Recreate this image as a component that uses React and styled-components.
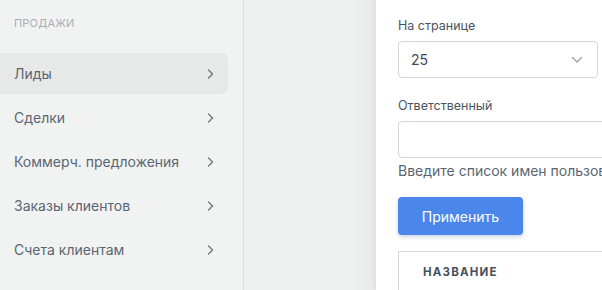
import React from "react";
import styled, { createGlobalStyle } from "styled-components";

const Global = createGlobalStyle`
  html, body { margin: 0; padding: 0; }
  body { font-family: "Inter", "Noto Sans", sans-serif; overflow: hidden; }
`;

const Page = styled.div`
  display: flex;
  width: 602px;
  height: 290px;
  overflow: hidden;
  background: #eff1f1;
`;

const Sidebar = styled.nav`
  flex: 0 0 244px;
  background: #f1f3f3;
  border-right: 1px solid #d9dde1;
  padding-top: 16px;
  box-sizing: border-box;
`;

const SectionTitle = styled.div`
  font-size: 11px;
  color: #a9aeb5;
  letter-spacing: 0.2px;
  padding-left: 14px;
  height: 14px;
  line-height: 14px;
  margin-bottom: 23px;
`;

const Item = styled.div`
  display: flex;
  align-items: center;
  justify-content: space-between;
  width: 228px;
  height: 41px;
  margin-bottom: 3px;
  padding: 0 14px 0 14px;
  box-sizing: border-box;
  border-radius: 0 6px 6px 0;
  font-size: 14px;
  color: #5b6572;
  background: ${(p) => (p.$active ? "#e7e9e9" : "transparent")};
`;

const Chevron = () => (
  <svg width="8" height="12" viewBox="0 0 8 12" fill="none">
    <path d="M2.5 2l4 4-4 4" stroke="#6b7480" strokeWidth="1.3" strokeLinecap="round" strokeLinejoin="round" />
  </svg>
);

const Backdrop = styled.div`
  flex: 0 0 132px;
  background: linear-gradient(to right, #eff1f1 0%, #eff1f1 80%, #e7e9ea 100%);
`;

const Drawer = styled.section`
  flex: 0 0 420px;
  background: #ffffff;
  padding: 17px 22px 0;
  box-sizing: border-box;
  box-shadow: -2px 0 6px rgba(0, 0, 0, 0.05);
`;

const Label = styled.div`
  font-size: 12.5px;
  color: #4a5360;
  height: 18px;
  line-height: 18px;
  margin-bottom: 6px;
`;

const Select = styled.div`
  display: flex;
  align-items: center;
  justify-content: space-between;
  width: 200px;
  height: 37px;
  border: 1px solid #d3d7db;
  border-radius: 4px;
  padding: 0 14px 0 12px;
  box-sizing: border-box;
  font-size: 14px;
  color: #3f4854;
  margin-bottom: 19px;
`;

const Input = styled.div`
  width: 380px;
  height: 37px;
  border: 1px solid #d3d7db;
  border-radius: 4px;
  box-sizing: border-box;
`;

const Help = styled.div`
  font-size: 14px;
  color: #5b6572;
  white-space: nowrap;
  margin-top: 3px;
  height: 20px;
  line-height: 20px;
  margin-bottom: 16px;
`;

const Button = styled.button`
  width: 125px;
  height: 38px;
  border: none;
  border-radius: 4px;
  background: #4b86ea;
  color: #ffffff;
  font-family: inherit;
  font-size: 14px;
  box-shadow: 0 2px 4px rgba(40, 80, 160, 0.25);
  margin-bottom: 16px;
  display: block;
`;

const Table = styled.div`
  border: 1px solid #d3d7db;
  border-bottom: none;
  height: 60px;
  padding: 13px 24px;
  box-sizing: border-box;
`;

const TableHead = styled.div`
  font-size: 11.5px;
  font-weight: 700;
  letter-spacing: 1.2px;
  color: #46505d;
`;

const items = ["Лиды", "Сделки", "Коммерч. предложения", "Заказы клиентов", "Счета клиентам"];

export default function App() {
  return (
    <>
      <Global />
      <Page>
        <Sidebar>
          <SectionTitle>ПРОДАЖИ</SectionTitle>
          {items.map((t, i) => (
            <Item key={t} $active={i === 0}>
              <span>{t}</span>
              <Chevron />
            </Item>
          ))}
        </Sidebar>
        <Backdrop />
        <Drawer>
          <Label>На странице</Label>
          <Select>
            <span>25</span>
            <svg width="12" height="8" viewBox="0 0 12 8" fill="none">
              <path d="M1.5 1.5l4.5 4.5 4.5-4.5" stroke="#9aa1a9" strokeWidth="1.3" strokeLinecap="round" strokeLinejoin="round" />
            </svg>
          </Select>
          <Label>Ответственный</Label>
          <Input />
          <Help>Введите список имен пользователей через запятую</Help>
          <Button>Применить</Button>
          <Table>
            <TableHead>НАЗВАНИЕ</TableHead>
          </Table>
        </Drawer>
      </Page>
    </>
  );
}
